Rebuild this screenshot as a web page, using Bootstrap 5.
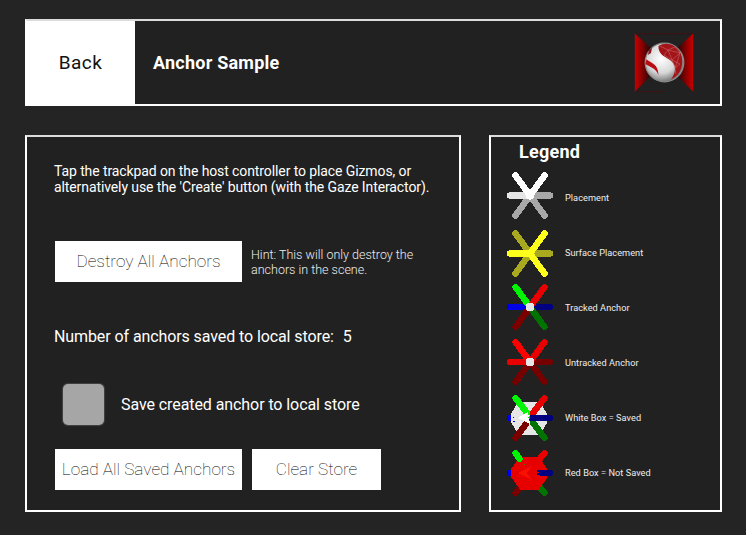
<!DOCTYPE html>
<html lang="en">
<head>
<meta charset="utf-8">
<meta name="viewport" content="width=device-width, initial-scale=1">
<title>Anchor Sample</title>
<link href="https://cdn.jsdelivr.net/npm/bootstrap@5.3.0/dist/css/bootstrap.min.css" rel="stylesheet">
<style>
html,body{height:100%}
body{background:#242424;color:#fff;font-family:Roboto,"Liberation Sans",sans-serif;overflow:hidden;padding:19px 24px 23px 25px;line-height:1}
.frame{background:#212121;border:2px solid #fff;border-top-color:#dcdcdc}
.top-bar{height:87px;margin-bottom:29px}
.back-btn{width:108px;font-size:19px;letter-spacing:.4px;padding-right:1px}
.title-text{font-size:18px;letter-spacing:.23px;margin-left:18px}
.logo-art{width:60px;height:60px;margin-right:26px}
.main-panel{width:436px;height:377px;padding:26px 27px 20px 28px}
.legend-panel{width:233px;height:377px;padding:5px 0 0 15px}
.intro{font-size:14px;letter-spacing:-.1px;line-height:16px;height:78px;margin-left:-1px;white-space:nowrap}
.flat{background:#fff;color:#222;font-weight:300;font-size:18px;height:41px;border:0;border-radius:0;padding:0;white-space:nowrap}
.flat.back-btn{font-size:19px;font-weight:400;color:#111;padding-right:1px}
.flat.thin{font-weight:100;color:#000;font-size:17.2px}
.wide{width:187px}
.slim{width:129px}
.store-actions{gap:10px}
.hint{font-size:12.5px;line-height:15px;font-weight:300;color:#eee;white-space:nowrap;margin-left:9px}
.count{font-size:16px;letter-spacing:-.11px;word-spacing:.1px;margin:47px 0 0 -1px;height:18px;white-space:pre}
.count span{margin-left:1px}
.check{width:41px;height:41px;border-radius:5px;background:#a6a6a6;margin-left:8px;box-shadow:0 0 1px 1px #444}
.save-row{margin-top:37px;margin-bottom:24px;font-size:16px;letter-spacing:-.08px}
.save-row label{margin-left:17px}
.legend-title{font-size:18px;letter-spacing:.25px;line-height:20px;margin:0 0 8px 13px}
.legend-row{height:55px;font-size:9.2px;letter-spacing:.04px;color:#eee}
.legend-row svg{width:48px;height:55px;margin-right:11px;shape-rendering:crispEdges;stroke-width:6.4;stroke-linecap:round;fill:none}
</style>
<script src="https://cdn.jsdelivr.net/npm/bootstrap@5.3.0/dist/js/bootstrap.bundle.min.js"></script>
</head>
<body>
<header class="frame top-bar d-flex align-items-center">
  <button class="flat back-btn h-100" type="button"><span>Back</span></button>
  <h1 class="title-text fw-bold mb-0"><span>Anchor Sample</span></h1>
  <svg class="logo-art ms-auto" viewBox="0 0 60 60" aria-label="Logo">
    <defs>
      <linearGradient id="wingL"><stop offset="0" stop-color="#c50000"/><stop offset=".3" stop-color="#a00000"/><stop offset="1" stop-color="#210808"/></linearGradient>
      <linearGradient id="wingR" x1="1" x2="0"><stop offset="0" stop-color="#c50000"/><stop offset=".3" stop-color="#a00000"/><stop offset="1" stop-color="#210808"/></linearGradient>
      <radialGradient id="ball" cx=".42" cy=".4" r=".62"><stop offset="0" stop-color="#fff"/><stop offset=".6" stop-color="#d8d8d8"/><stop offset="1" stop-color="#747474"/></radialGradient>
    </defs>
    <path d="M1 .7H59M1 58.500H30" stroke="#4a0b0b" stroke-width=".7"/>
    <path d="M.8 .5L17 15V43L.8 58.500Z" fill="url(#wingL)"/>
    <path d="M59.2 .5L43 15V43L59.2 58.500Z" fill="url(#wingR)"/>
    <circle cx="30.5" cy="29.5" r="19.300" fill="url(#ball)" stroke="#8c8c8c" stroke-width="1.200"/>
    <path d="M24.5 13C31 8.500 42 11 46.500 20C51 31 47 42 37 46.500C43 38 42 31 36 27C29 23 24 20 24.500 13Z" fill="#a31419"/>
    <path d="M26 13L34 17L30 22L38 27L46 20L41 35L38 27L34 17L41 14L46 20L34 17M38 27L46 31L41 35L42 41" stroke="#c87474" stroke-width=".5" fill="none"/>
    <path d="M12.500 26C15 30 24 29 24.500 42C21 34 15 34 11.500 31Z" fill="#b80d12"/>
    <path d="M15 17L18 15L17 20L14 22Z" fill="#8d1519"/>
  </svg>
</header>
<main class="d-flex justify-content-between">
  <section class="frame main-panel">
    <p class="intro mb-0"><span>Tap the trackpad on the host controller to place Gizmos, or</span><br><span>alternatively use the 'Create' button (with the Gaze Interactor).</span></p>
    <div class="d-flex align-items-center">
      <button class="flat thin wide" type="button">Destroy All Anchors</button>
      <div class="hint"><span>Hint: This will only destroy the</span><br><span>anchors in the scene.</span></div>
    </div>
    <div class="count">Number of anchors saved to local store:  <span>5</span></div>
    <div class="save-row d-flex align-items-center"><div class="check" role="checkbox" aria-checked="false" aria-labelledby="saveLabel"></div><label id="saveLabel">Save created anchor to local store</label></div>
    <div class="store-actions d-flex">
      <button class="flat thin wide" type="button">Load All Saved Anchors</button>
      <button class="flat thin slim" type="button">Clear Store</button>
    </div>
  </section>
  <aside class="frame legend-panel">
    <h2 class="legend-title fw-bold">Legend</h2>
    <div class="legend-row d-flex align-items-center">
      <svg viewBox="-24 -25.500 48 55"><path d="M0 0H20M0 0L-14.500 20M0 0L14.500 20" stroke="#a8a8a8"/><path d="M0 0H-20" stroke="#e6e6e6"/><path d="M-14.500 -20L0 0L14.500 -20" stroke="#fff"/><circle r="4" fill="#fff"/></svg>
      <span>Placement</span>
    </div>
    <div class="legend-row d-flex align-items-center">
      <svg viewBox="-24 -28.500 48 55"><path d="M0 0H20M0 0L-14.500 20M0 0L-14.500 -20" stroke="#a9a91f"/><path d="M-20 0H0L14.500 -20M0 0L14.500 20" stroke="#ffff1c"/><circle r="3.500" fill="#ffff1c"/></svg>
      <span>Surface Placement</span>
    </div>
    <div class="legend-row d-flex align-items-center">
      <svg viewBox="-24 -27 48 55"><path d="M0 0H20" stroke="#000080"/><path d="M0 0H-20" stroke="#0000e6"/><path d="M0 0L-14.500 20" stroke="#7a0000"/><path d="M0 0L14.500 20" stroke="#007300"/><path d="M0 0L-14.500 -20" stroke="#00f500"/><path d="M0 0L14.500 -20" stroke="#e80000"/><circle r="4.500" fill="#e6e6e6" stroke="none"/></svg>
      <span>Tracked Anchor</span>
    </div>
    <div class="legend-row d-flex align-items-center">
      <svg viewBox="-24 -27 48 55"><path d="M0 0H20M0 0L-14.500 20M0 0L14.500 20" stroke="#750000"/><path d="M-20 0H0L14.500 -20" stroke="#e80000"/><path d="M0 0L-14.500 -20" stroke="#fa0000"/><circle r="4.500" fill="#e6e6e6" stroke="none"/></svg>
      <span>Untracked Anchor</span>
    </div>
    <div class="legend-row d-flex align-items-center">
      <svg viewBox="-24 -28 48 55"><path d="M-20 0H-10" stroke="#0000f0"/><path d="M-12 -16.500H10L17 -4V5L10 16.500H-12L-19 4V-4Z" fill="#e6e6e6"/><path d="M-17 -1H-16M-17 3H-15" stroke="#00f" stroke-width="1" stroke-linecap="butt"/><path d="M-14.500 20L-4 6" stroke="#7a0000"/><path d="M14.500 20L1 2" stroke="#007300"/><path d="M-14.500 -20L-3 -5" stroke="#00f500"/><path d="M14.500 -20L3 -5" stroke="#e80000"/><path d="M20 0H2" stroke="#000080"/><path d="M-12 0L-2 -6L-1 0L0 6Z" fill="#fff"/><path d="M-2 0L0 -3V2Z" fill="#00d800"/></svg>
      <span>White Box = Saved</span>
    </div>
    <div class="legend-row d-flex align-items-center">
      <svg viewBox="-24 -28 48 55"><path d="M-20 0H-10" stroke="#0000f0"/><path d="M-14.500 20L-8 12" stroke="#7a0000"/><path d="M14.500 20L8 12" stroke="#007300"/><path d="M14.500 -20L8 -12" stroke="#e80000"/><path d="M-10 -16.500H9L17 -4V5L9 16.500H-10L-19 4V-4Z" fill="#e60000"/><path d="M-14.500 -20L-10.500 -14" stroke="#00f500"/><path d="M20 0H12" stroke="#000080"/><path d="M7 -2H10M7 1H10" stroke="#000080" stroke-width="2" stroke-linecap="butt"/><path d="M-12 0L2 -7L-3 0L2 7Z" fill="#fa0f00"/><path d="M-6 -9H-5" stroke="#4a8a00" stroke-width="1" stroke-linecap="butt"/></svg>
      <span>Red Box = Not Saved</span>
    </div>
  </aside>
</main>
</body>
</html>
